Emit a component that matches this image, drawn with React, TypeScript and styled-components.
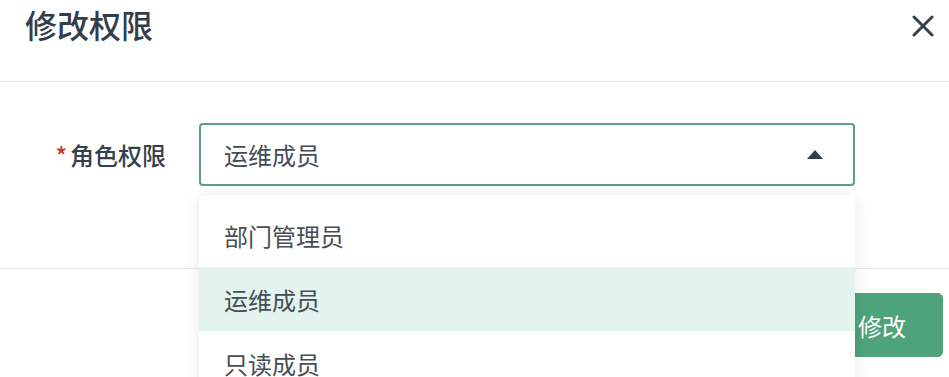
import React from "react";
import styled, { createGlobalStyle } from "styled-components";

const GlobalStyle = createGlobalStyle`
  html, body {
    margin: 0;
    padding: 0;
    background: #ffffff;
    font-family: "Noto Sans CJK SC", "Noto Sans", sans-serif;
  }
`;

const options = ["部门管理员", "运维成员", "只读成员"];
const current = "运维成员";

const App = () => {
  return (
    <>
      <GlobalStyle />
      <Dialog>
        <Header>
          <Title>修改权限</Title>
          <CloseButton aria-label="close">
            <svg width="22" height="22" viewBox="0 0 22 22">
              <path
                d="M2 2 L20 20 M20 2 L2 20"
                stroke="#363f4c"
                strokeWidth="3"
                strokeLinecap="round"
              />
            </svg>
          </CloseButton>
        </Header>
        <Body>
          <FormRow>
            <Label>
              <Star>*</Star>角色权限
            </Label>
            <SelectWrap>
              <SelectBox>
                <span>{current}</span>
                <Caret />
              </SelectBox>
              <Dropdown>
                {options.map((o) => (
                  <Option key={o} $active={o === current}>
                    {o}
                  </Option>
                ))}
              </Dropdown>
            </SelectWrap>
          </FormRow>
        </Body>
        <Footer>
          <Button>取消</Button>
          <Button $primary>修改</Button>
        </Footer>
      </Dialog>
    </>
  );
};

export default App;

const Dialog = styled.div`
  width: 949px;
  height: 377px;
  overflow: hidden;
  background: #ffffff;
`;

const Header = styled.div`
  height: 81px;
  border-bottom: 1px solid #e6e7e9;
  display: flex;
  justify-content: space-between;
  align-items: flex-start;
  padding: 0 15px 0 25px;
`;

const Title = styled.div`
  font-size: 32px;
  line-height: 48px;
  font-weight: 500;
  color: #343d4a;
`;

const CloseButton = styled.button`
  margin-top: 15px;
  padding: 0;
  border: none;
  background: transparent;
  width: 22px;
  height: 22px;
  display: flex;
  cursor: pointer;
`;

const Body = styled.div`
  height: 186px;
  box-sizing: border-box;
  padding-top: 41px;
`;

const FormRow = styled.div`
  display: flex;
  align-items: center;
`;

const Label = styled.label`
  width: 199px;
  padding-right: 33px;
  box-sizing: border-box;
  text-align: right;
  font-size: 24px;
  font-weight: 500;
  color: #363f4c;
  flex-shrink: 0;
`;

const Star = styled.span`
  color: #c2392f;
  margin-right: 3px;
`;

const SelectWrap = styled.div`
  position: relative;
  width: 656px;
`;

const SelectBox = styled.div`
  height: 63px;
  box-sizing: border-box;
  border: 2px solid #5a9f84;
  border-radius: 4px;
  display: flex;
  align-items: center;
  justify-content: space-between;
  padding: 0 30px 0 23px;
  font-size: 24px;
  color: #454b55;
`;

const Caret = styled.span`
  width: 0;
  height: 0;
  border-left: 8px solid transparent;
  border-right: 8px solid transparent;
  border-bottom: 9px solid #343d4a;
`;

const Dropdown = styled.ul`
  position: absolute;
  top: 72px;
  left: 0;
  right: 0;
  margin: 0;
  padding: 8px 0;
  list-style: none;
  background: #ffffff;
  box-shadow: 0 2px 14px rgba(0, 0, 0, 0.1);
  border-radius: 4px;
  z-index: 10;
`;

const Option = styled.li<{ $active?: boolean }>`
  height: 64px;
  display: flex;
  align-items: center;
  padding-left: 25px;
  font-size: 24px;
  color: #474d56;
  background: ${(p) => (p.$active ? "#e3f4ee" : "#ffffff")};
`;

const Footer = styled.div`
  border-top: 1px solid #e6e7e9;
  padding: 24px 6px 0 0;
  display: flex;
  justify-content: flex-end;
  gap: 16px;
`;

const Button = styled.button<{ $primary?: boolean }>`
  height: 64px;
  padding: 0 36px;
  border-radius: 5px;
  font-family: inherit;
  font-size: 24px;
  cursor: pointer;
  border: 1px solid ${(p) => (p.$primary ? "#4fa37c" : "#d5d8dc")};
  background: ${(p) => (p.$primary ? "#4fa37c" : "#ffffff")};
  color: ${(p) => (p.$primary ? "#ffffff" : "#454b55")};
`;
